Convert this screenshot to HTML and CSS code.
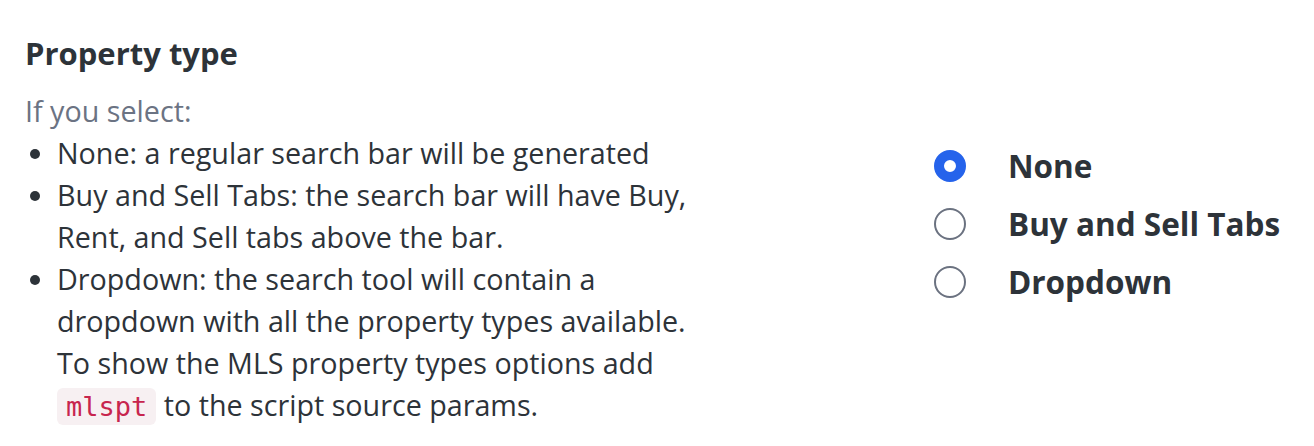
FILE: index.html
```html
<!DOCTYPE html>
<html>
<head>
<meta charset="utf-8">
<link rel="stylesheet" href="styles.css">
</head>
<body>
<section class="setting">
  <div class="desc">
    <h2 class="title">Property type</h2>
    <p class="intro">If you select:</p>
    <ul class="list">
      <li>None: a regular search bar will be generated</li>
      <li>Buy and Sell Tabs: the search bar will have Buy, Rent, and Sell tabs above the bar.</li>
      <li>Dropdown: the search tool will contain a dropdown with all the property types available. To show the MLS property types options add <code class="code">mlspt</code> to the script source params.</li>
    </ul>
  </div>
  <div class="options">
    <label class="option"><span class="radio checked"></span><span class="label">None</span></label>
    <label class="option"><span class="radio"></span><span class="label">Buy and Sell Tabs</span></label>
    <label class="option"><span class="radio"></span><span class="label">Dropdown</span></label>
  </div>
</section>
</body>
</html>
```
FILE: styles.css
```css
html, body {
  margin: 0;
  padding: 0;
  background: #ffffff;
}
body {
  font-family: "Open Sans", "Noto Sans", sans-serif;
  color: #2d3339;
}
.setting {
  display: flex;
  align-items: flex-start;
  padding: 36px 0 0 25px;
}
.desc {
  width: 684px;
  flex: none;
}
.title {
  margin: 0;
  font-size: 31px;
  font-weight: 700;
  line-height: 34px;
  color: #2d3339;
}
.intro {
  margin: 20px 0 0;
  font-size: 28.7px;
  line-height: 42px;
  color: #6b7383;
}
.list {
  margin: 0;
  padding: 0 0 0 32px;
  font-size: 28.7px;
  line-height: 42px;
  color: #2d3339;
}
.code {
  font-family: "DejaVu Sans Mono", "Liberation Mono", monospace;
  font-size: 27px;
  font-weight: 500;
  color: #c7254e;
  background: #f7f0f2;
  border-radius: 6px;
  padding: 3px 9px;
}
.options {
  margin: 114px 0 0 225px;
  display: flex;
  flex-direction: column;
  gap: 26px;
}
.option {
  display: flex;
  align-items: center;
  gap: 42px;
}
.radio {
  width: 32px;
  height: 32px;
  box-sizing: border-box;
  border-radius: 50%;
  border: 2px solid #6b7280;
  flex: none;
}
.radio.checked {
  border: 10px solid #2563eb;
}
.label {
  font-size: 31.5px;
  font-weight: 700;
  line-height: 32px;
  color: #2d3339;
}
```
